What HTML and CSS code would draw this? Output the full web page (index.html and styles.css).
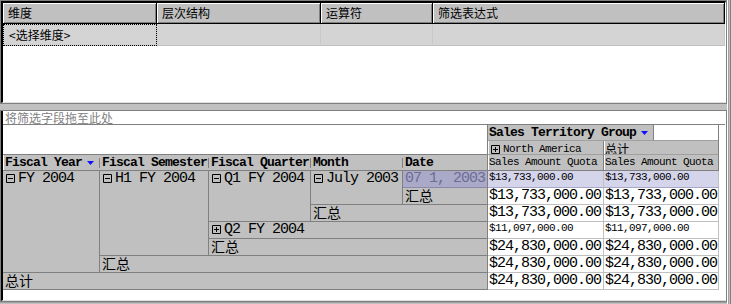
FILE: index.html
```html
<!DOCTYPE html>
<html lang="zh-CN">
<head>
<meta charset="utf-8">
<title>筛选</title>
<link rel="stylesheet" href="styles.css">
</head>
<body>
<div class="window">
  <div class="panel top">
    <div class="panel-inner top-inner">
      <div class="filter-head">
        <div class="fh c-dim">维度</div>
        <div class="fh c-hier">层次结构</div>
        <div class="fh c-op">运算符</div>
        <div class="fh c-expr">筛选表达式</div>
      </div>
      <div class="filter-row">
        <div class="fr c-dim focus">&lt;选择维度&gt;</div>
        <div class="fr c-hier"></div>
        <div class="fr c-op"></div>
        <div class="fr c-expr"></div>
      </div>
    </div>
  </div>
  <div class="splitter"></div>
  <div class="panel bottom">
    <div class="panel-inner bottom-inner">
      <div class="dropzone">将筛选字段拖至此处</div>
      <div class="pivot">
        <div class="cell blank c1 w5 r1 h2"></div>
        <div class="cell ch group c6 w2 r1">Sales Territory Group<svg class="tri" width="7" height="4" viewBox="0 0 7 4"><path d="M0 0h7L3.5 4z" fill="#1010ff"/></svg></div>
        <div class="cell spare c8 r1"></div>
        <div class="cell ch member c6 r2"><svg class="tog" width="9" height="9" viewBox="0 0 9 9"><path d="M.5.5h8v8h-8z" fill="none" stroke="#000"/><path d="M2 4.5h5M4.5 2v5" stroke="#000"/></svg>North America</div>
        <div class="cell ch member cjk c7 w2 r2">总计</div>

        <div class="cell lh c1 r3">Fiscal Year<svg class="tri" width="7" height="4" viewBox="0 0 7 4"><path d="M0 0h7L3.5 4z" fill="#1010ff"/></svg></div>
        <div class="cell lh c2 r3">Fiscal Semester</div>
        <div class="cell lh c3 r3">Fiscal Quarter</div>
        <div class="cell lh c4 r3">Month</div>
        <div class="cell lh last c5 r3">Date</div>
        <div class="cell ch measure c6 r3">Sales Amount Quota</div>
        <div class="cell ch measure c7 w2 r3">Sales Amount Quota</div>

        <div class="cell rh c1 r4 h6"><svg class="tog" width="9" height="9" viewBox="0 0 9 9"><path d="M.5.5h8v8h-8z" fill="none" stroke="#000"/><path d="M2 4.5h5" stroke="#000"/></svg>FY 2004</div>
        <div class="cell rh c2 r4 h5"><svg class="tog" width="9" height="9" viewBox="0 0 9 9"><path d="M.5.5h8v8h-8z" fill="none" stroke="#000"/><path d="M2 4.5h5" stroke="#000"/></svg>H1 FY 2004</div>
        <div class="cell rh c3 r4 h3"><svg class="tog" width="9" height="9" viewBox="0 0 9 9"><path d="M.5.5h8v8h-8z" fill="none" stroke="#000"/><path d="M2 4.5h5" stroke="#000"/></svg>Q1 FY 2004</div>
        <div class="cell rh c4 r4 h2"><svg class="tog" width="9" height="9" viewBox="0 0 9 9"><path d="M.5.5h8v8h-8z" fill="none" stroke="#000"/><path d="M2 4.5h5" stroke="#000"/></svg>July 2003</div>
        <div class="cell rh sel c5 r4">07 1, 2003</div>
        <div class="cell v sm hl c6 r4">$13,733,000.00</div>
        <div class="cell v sm hl c7 w2 r4">$13,733,000.00</div>

        <div class="cell rh sum c5 r5">汇总</div>
        <div class="cell v c6 r5">$13,733,000.00</div>
        <div class="cell v c7 w2 r5">$13,733,000.00</div>

        <div class="cell rh sum c4 w2 r6">汇总</div>
        <div class="cell v c6 r6">$13,733,000.00</div>
        <div class="cell v c7 w2 r6">$13,733,000.00</div>

        <div class="cell rh c3 w3 r7"><svg class="tog" width="9" height="9" viewBox="0 0 9 9"><path d="M.5.5h8v8h-8z" fill="none" stroke="#000"/><path d="M2 4.5h5M4.5 2v5" stroke="#000"/></svg>Q2 FY 2004</div>
        <div class="cell v sm c6 r7">$11,097,000.00</div>
        <div class="cell v sm c7 w2 r7">$11,097,000.00</div>

        <div class="cell rh sum c3 w3 r8">汇总</div>
        <div class="cell v c6 r8">$24,830,000.00</div>
        <div class="cell v c7 w2 r8">$24,830,000.00</div>

        <div class="cell rh sum c2 w4 r9">汇总</div>
        <div class="cell v c6 r9">$24,830,000.00</div>
        <div class="cell v c7 w2 r9">$24,830,000.00</div>

        <div class="cell rh sum c1 w5 r10">总计</div>
        <div class="cell v c6 r10">$24,830,000.00</div>
        <div class="cell v c7 w2 r10">$24,830,000.00</div>
      </div>
    </div>
  </div>
  <div class="footer"></div>
</div>
</body>
</html>
```
FILE: styles.css
```css
* { box-sizing: border-box; }
html, body { margin: 0; padding: 0; }
body {
  width: 731px;
  height: 304px;
  overflow: hidden;
  background: #c0c0c0;
  font-family: "Noto Sans CJK SC", sans-serif;
}
.window {
  width: 731px;
  height: 304px;
  display: flex;
  flex-direction: column;
  background: #e8e8e8;
  box-shadow: inset -1px 0 #808080, inset -2px 0 #c0c0c0, inset -3px 0 #a0a0a0, inset -4px 0 #fff;
}
.panel {
  width: 727px;
  border: 1px solid #808080;
}
.panel-inner {
  border-left: 2px solid #000;
  border-right: 1px solid #fff;
  background: #fff;
}
.top { height: 104px; }
.top-inner {
  height: 102px;
  border-top: 2px solid #000;
  border-bottom: 1px solid #dfdfdf;
}
.filter-head { display: flex; height: 21px; }
.fh {
  height: 21px;
  background: #c0c0c0;
  border-right: 1px solid #000;
  border-bottom: 1px solid #000;
  box-shadow: inset 1px 1px #fff, inset -1px -1px #808080;
  font: 12px/20px "Noto Sans CJK SC", sans-serif;
  color: #000;
  padding-left: 5px;
}
.c-dim { width: 154px; }
.c-hier { width: 164px; }
.c-op { width: 112px; }
.c-expr { width: 292px; }
.filter-row { display: flex; height: 22px; }
.fr {
  height: 22px;
  background: #d4d4d4;
  border-right: 1px solid #c8c8c8;
  border-bottom: 1px solid #c0c0c0;
  font: 12px/21px "Noto Sans CJK SC", sans-serif;
  color: #000;
  padding-left: 6px;
}
.fr.focus { outline: 1px dotted #000; outline-offset: -1px; }
.splitter { height: 6px; width: 727px; background: #c0c0c0; }
.bottom { height: 192px; }
.bottom-inner {
  height: 190px;
  border-bottom: 1px solid #dfdfdf;
}
.footer { height: 2px; width: 727px; background: #c0c0c0; border-top: 1px solid #a0a0a0; }
.dropzone {
  height: 14px;
  border-bottom: 1px solid #808080;
  color: #808080;
  font: 12px/13px "Noto Sans CJK SC", sans-serif;
  padding-left: 2px;
}
.pivot {
  display: grid;
  width: 716px;
  grid-template-columns: 97px 109px 102px 92px 85px 116px 50px 65px;
  grid-template-rows: 16px 14px 16px repeat(7, 17px);
}
.cell {
  display: flex;
  align-items: flex-start;
  overflow: hidden;
  white-space: nowrap;
  color: #000;
  font-family: "Liberation Mono", "DejaVu Sans Mono", monospace;
}
.c1 { grid-column-start: 1; }
.c2 { grid-column-start: 2; }
.c3 { grid-column-start: 3; }
.c4 { grid-column-start: 4; }
.c5 { grid-column-start: 5; }
.c6 { grid-column-start: 6; }
.c7 { grid-column-start: 7; }
.c8 { grid-column-start: 8; }
.w2 { grid-column-end: span 2; }
.w3 { grid-column-end: span 3; }
.w4 { grid-column-end: span 4; }
.w5 { grid-column-end: span 5; }
.r1 { grid-row-start: 1; }
.r2 { grid-row-start: 2; }
.r3 { grid-row-start: 3; }
.r4 { grid-row-start: 4; }
.r5 { grid-row-start: 5; }
.r6 { grid-row-start: 6; }
.r7 { grid-row-start: 7; }
.r8 { grid-row-start: 8; }
.r9 { grid-row-start: 9; }
.r10 { grid-row-start: 10; }
.h2 { grid-row-end: span 2; }
.h3 { grid-row-end: span 3; }
.h5 { grid-row-end: span 5; }
.h6 { grid-row-end: span 6; }

.blank {
  background: #fff;
  border-right: 1px solid #808080;
  border-bottom: 1px solid #808080;
}
.spare {
  background: #fff;
  border-right: 1px solid #808080;
  border-bottom: 1px solid #a0a0a0;
}
.ch {
  background: #c0c0c0;
  border-right: 1px solid #808080;
  border-bottom: 1px solid #a0a0a0;
  font-size: 11px;
  letter-spacing: -0.6px;
  line-height: 14px;
  padding-left: 1px;
}
.ch.group {
  font-weight: bold;
  font-size: 13px;
  letter-spacing: -0.8px;
  line-height: 16px;
  border-bottom-color: #a0a0a0;
}
.ch.member { padding-top: 1px; box-shadow: inset 1px 0 #fff; }
.ch.measure { box-shadow: inset 1px 0 #fff; border-bottom-color: #808080; }
.ch.cjk {
  font-family: "Noto Sans CJK SC", sans-serif;
  font-size: 12px;
  letter-spacing: 0;
  line-height: 13px;
}
.tri { margin-top: 6px; margin-left: 5px; flex: none; }
.ch.group .tri { margin-top: 6px; }
.tog { flex: none; margin-top: 3px; margin-right: 3px; }
.ch .tog { margin-top: 3px; margin-left: 2px; margin-right: 3px; }

.lh {
  background: #c0c0c0 linear-gradient(#808080, #808080) no-repeat right 0 top 3px / 1px 10px;
  border-bottom: 1px solid #808080;
  font-weight: bold;
  font-size: 13px;
  letter-spacing: -0.8px;
  line-height: 16px;
  padding-left: 2px;
}
.lh.c1 { box-shadow: inset 1px 0 #fff; }
.lh.last { background: #c0c0c0; border-right: 1px solid #808080; }

.rh {
  background: #c0c0c0;
  border-right: 1px solid #808080;
  border-bottom: 1px solid #808080;
  font-size: 15px;
  letter-spacing: -1px;
  line-height: 16px;
  padding-left: 3px;
}
.rh.sel {
  background: #aaaac8;
  color: #6c6c94;
  padding-left: 2px;
  border-bottom-color: #8a8aa8;
}
.rh.sum {
  font-family: "Noto Sans CJK SC", sans-serif;
  font-size: 14px;
  letter-spacing: 0;
  line-height: 14px;
  padding-left: 2px;
}
.v {
  background: #fff;
  border-right: 1px solid #c0c0c0;
  border-bottom: 1px solid #c0c0c0;
  font-size: 15px;
  letter-spacing: -1px;
  line-height: 16px;
  padding-left: 1px;
}
.v.sm {
  font-size: 11px;
  letter-spacing: -0.6px;
  line-height: 13px;
}
.v.hl {
  background: #d4d4ea;
  border-bottom-color: #a8a8c8;
}
```
